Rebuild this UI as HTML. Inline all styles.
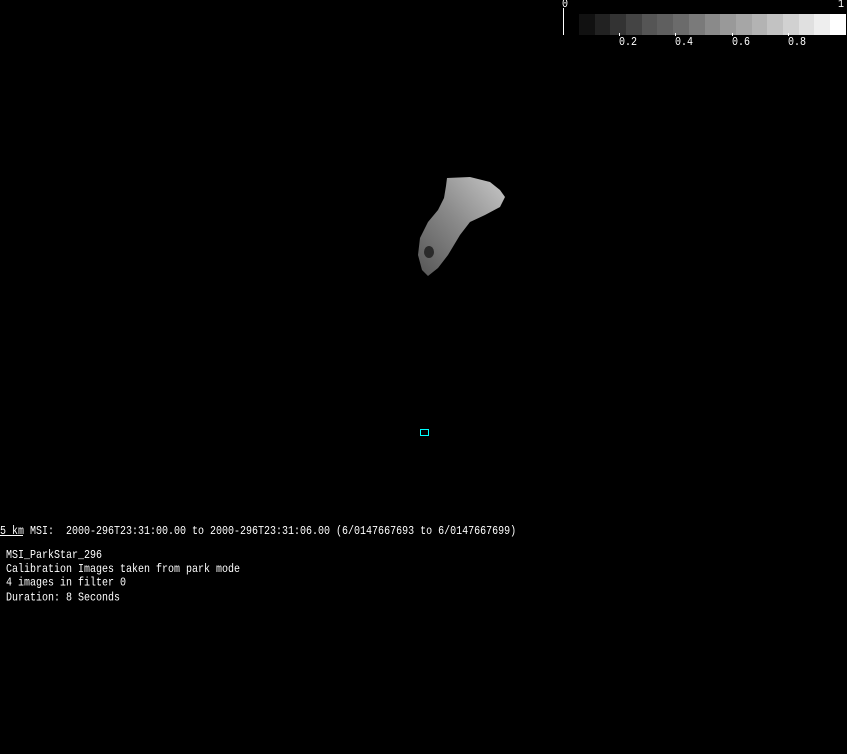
<!DOCTYPE html><html><head><style>
body{margin:0;background:#000;width:847px;height:754px;overflow:hidden;position:relative;font-family:"Liberation Mono",monospace;color:#fff;font-size:10px}
.t{position:absolute;white-space:pre;line-height:12.17px;transform:scaleY(1.15);transform-origin:0 0}
.cb{position:absolute;top:14px;left:579px;display:flex;height:21px}
.cb div{width:15.7px;height:21px}
</style></head><body>
<div class="cb">
<div style="background:#111"></div><div style="background:#222"></div><div style="background:#333"></div><div style="background:#444"></div><div style="background:#555"></div><div style="background:#5f5f5f"></div><div style="background:#6b6b6b"></div><div style="background:#7a7a7a"></div><div style="background:#8a8a8a"></div><div style="background:#999"></div><div style="background:#a6a6a6"></div><div style="background:#b3b3b3"></div><div style="background:#c2c2c2"></div><div style="background:#d1d1d1"></div><div style="background:#e0e0e0"></div><div style="background:#eee"></div><div style="background:#fff"></div>
</div>
<div style="position:absolute;left:563px;top:8px;width:1px;height:27px;background:#fff"></div>
<div style="position:absolute;left:845px;top:14px;width:1px;height:21px;background:#fff"></div>
<div style="position:absolute;left:619px;top:33px;width:1px;height:3px;background:#fff"></div>
<div style="position:absolute;left:675px;top:33px;width:1px;height:3px;background:#fff"></div>
<div style="position:absolute;left:732px;top:33px;width:1px;height:3px;background:#fff"></div>
<div style="position:absolute;left:788px;top:33px;width:1px;height:3px;background:#fff"></div>
<div class="t" style="left:562px;top:-1px">0</div>
<div class="t" style="left:838px;top:-1px">1</div>
<div class="t" style="left:619px;top:37px">0.2</div>
<div class="t" style="left:675px;top:37px">0.4</div>
<div class="t" style="left:732px;top:37px">0.6</div>
<div class="t" style="left:788px;top:37px">0.8</div>
<svg style="position:absolute;left:0;top:0" width="847" height="754">
<defs><linearGradient id="g" x1="0" y1="1" x2="1" y2="0"><stop offset="0" stop-color="#555"/><stop offset="0.5" stop-color="#8a8a8a"/><stop offset="1" stop-color="#c8c8c8"/></linearGradient></defs>
<polygon fill="url(#g)" points="447,178 470,177 490,182 500,190 505,197 500,207 485,215 470,222 460,235 448,255 438,268 428,276 422,270 418,255 420,238 428,222 438,210 444,198 446,186"/>
<ellipse cx="429" cy="252" rx="5" ry="6" fill="#2a2a2a"/>
<rect x="420.5" y="429.5" width="8" height="6" fill="none" stroke="#0ff" stroke-width="1"/>
<line x1="0" y1="535.5" x2="23" y2="535.5" stroke="#fff"/>
</svg>
<div class="t" style="left:0;top:526px">5 km MSI:  2000-296T23:31:00.00 to 2000-296T23:31:06.00 (6/0147667693 to 6/0147667699)</div>
<div class="t" style="left:6px;top:550px">MSI_ParkStar_296
Calibration Images taken from park mode
4 images in filter 0
Duration: 8 Seconds</div>
</body></html>
